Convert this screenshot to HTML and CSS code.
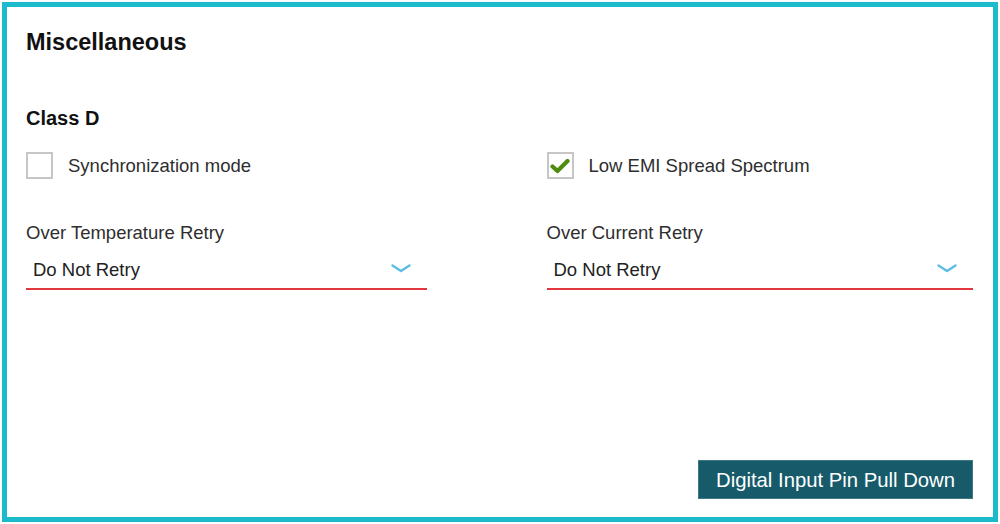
FILE: index.html
```html
<!DOCTYPE html>
<html lang="en">
<head>
<meta charset="utf-8">
<title>Miscellaneous</title>
<link rel="stylesheet" href="styles.css">
</head>
<body>
<div class="page">
  <section class="panel">
    <h1 class="panel__title">Miscellaneous</h1>
    <h2 class="panel__subtitle">Class D</h2>
    <div class="grid">
      <label class="check">
        <span class="check__box"></span>
        <span class="check__label">Synchronization mode</span>
      </label>
      <label class="check">
        <span class="check__box">
          <svg class="check__mark" viewBox="0 0 20 16" width="20" height="16"><path d="M2.5 8.5 L7.5 13 L17.5 3" fill="none" stroke="#4e8b10" stroke-width="4.2" stroke-linecap="round" stroke-linejoin="round"/></svg>
        </span>
        <span class="check__label">Low EMI Spread Spectrum</span>
      </label>
      <div class="field field--narrow">
        <div class="field__label">Over Temperature Retry</div>
        <div class="select">
          <span class="select__value">Do Not Retry</span>
          <svg class="select__chevron" viewBox="0 0 20 9" width="20" height="9"><path d="M1.5 1.5 L10 7 L18.5 1.5" fill="none" stroke="#5cbde3" stroke-width="2.4" stroke-linecap="round" stroke-linejoin="round"/></svg>
        </div>
      </div>
      <div class="field">
        <div class="field__label">Over Current Retry</div>
        <div class="select">
          <span class="select__value">Do Not Retry</span>
          <svg class="select__chevron" viewBox="0 0 20 9" width="20" height="9"><path d="M1.5 1.5 L10 7 L18.5 1.5" fill="none" stroke="#5cbde3" stroke-width="2.4" stroke-linecap="round" stroke-linejoin="round"/></svg>
        </div>
      </div>
    </div>
    <div class="actions">
      <button class="btn" type="button">Digital Input Pin Pull Down</button>
    </div>
  </section>
</div>
</body>
</html>
```

FILE: styles.css
```css
html, body {
  margin: 0;
  padding: 0;
  background: #ffffff;
}

body {
  font-family: "Liberation Sans", Arial, sans-serif;
  color: #2b2b2b;
}

.page {
  padding: 2px;
  width: 1000px;
  height: 524px;
  box-sizing: border-box;
}

.panel {
  box-sizing: border-box;
  width: 996px;
  height: 520px;
  border: 5px solid #1bbbcb;
  padding: 21px 20px 18px 19px;
  display: flex;
  flex-direction: column;
}

.panel__title {
  margin: 0;
  font-size: 23.5px;
  line-height: 28px;
  font-weight: bold;
  color: #111;
}

.panel__subtitle {
  margin: 50px 0 0 0;
  font-size: 20px;
  line-height: 24px;
  font-weight: bold;
  color: #111;
}

.grid {
  margin-top: 22px;
  display: grid;
  grid-template-columns: 1fr 1fr;
  column-gap: 94px;
  row-gap: 43px;
}

.check {
  display: flex;
  align-items: center;
  gap: 15px;
  font-size: 18.5px;
  line-height: 22px;
}

.check__box {
  box-sizing: border-box;
  width: 27px;
  height: 27px;
  border: 2px solid #c6c6c6;
  background: #fff;
  display: flex;
  align-items: center;
  justify-content: center;
  flex: none;
}

.check__mark {
  display: block;
}

.check__label {
  color: #2e2e2e;
}

.field {
  display: flex;
  flex-direction: column;
  font-size: 18.5px;
  line-height: 22px;
}

.field--narrow {
  width: 401px;
}

.field__label {
  color: #2e2e2e;
}

.select {
  margin-top: 15px;
  display: flex;
  align-items: center;
  justify-content: space-between;
  padding: 0 16px 7px 7px;
  border-bottom: 2px solid #e2383d;
}

.select__value {
  color: #222;
}

.select__chevron {
  display: block;
  margin-top: -4px;
}

.actions {
  margin-top: auto;
  display: flex;
  justify-content: flex-end;
}

.btn {
  font-family: "Liberation Sans", Arial, sans-serif;
  font-size: 20.3px;
  line-height: 24px;
  height: 39px;
  padding: 0 17px 0 17px;
  background: #175a6a;
  color: #ffffff;
  border: 1px solid #3f7785;
  border-radius: 0;
}
```
